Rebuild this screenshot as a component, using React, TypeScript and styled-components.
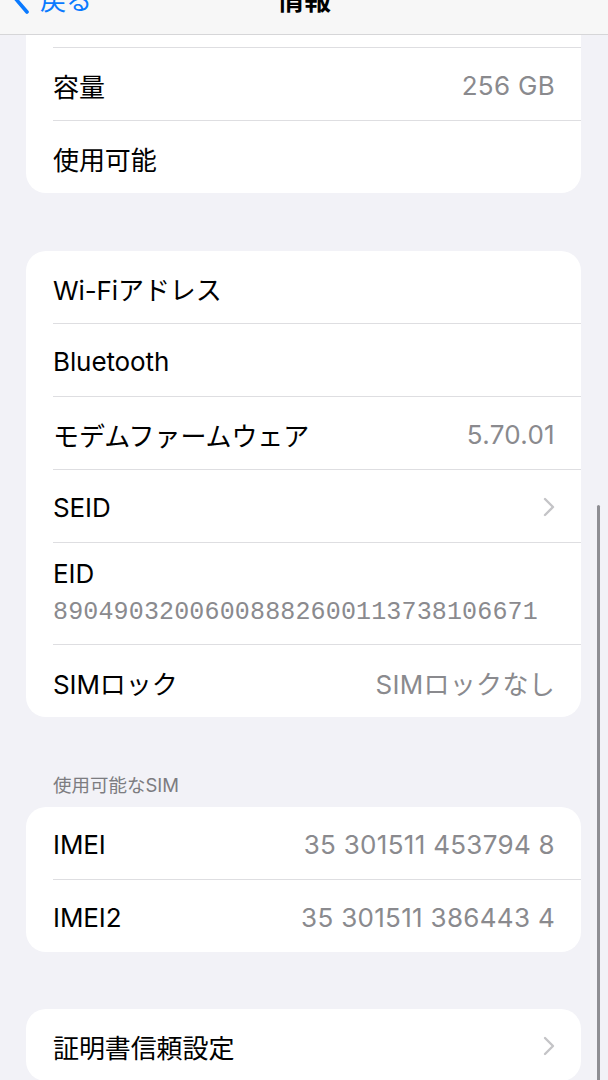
import styled, { createGlobalStyle } from "styled-components";

const GlobalStyle = createGlobalStyle`
  html, body {
    margin: 0;
    padding: 0;
    background: #f2f2f7;
  }
  body {
    font-family: "Inter", "Noto Sans CJK JP", sans-serif;
    -webkit-font-smoothing: antialiased;
  }
`;

const Page = styled.div`
  position: relative;
  width: 608px;
  height: 1080px;
  overflow: hidden;
  background: #f2f2f7;
`;

const NavBar = styled.div`
  height: 34px;
  overflow: hidden;
  background: #f7f7f7;
  border-bottom: 1px solid #d6d6d8;
`;

const NavInner = styled.div`
  position: relative;
  display: flex;
  align-items: center;
  justify-content: center;
  height: 40px;
  margin-top: -22px;
`;

const BackButton = styled.div`
  position: absolute;
  left: 12px;
  top: 0;
  bottom: 0;
  display: flex;
  align-items: center;
  gap: 10px;
  color: #0a7aff;
  font-size: 26px;
`;

const NavTitle = styled.div`
  font-size: 27px;
  font-weight: 700;
  color: #000;
`;

const Content = styled.div`
  padding: 0 27px 0 26px;
`;

const Card = styled.div<{ $cutTop?: boolean; $gap?: number }>`
  background: #fff;
  border-radius: ${({ $cutTop }) => ($cutTop ? "0 0 20px 20px" : "20px")};
  margin-top: ${({ $gap }) => $gap ?? 0}px;
  overflow: hidden;
`;

const Sliver = styled.div`
  height: 12px;
`;

const Row = styled.div<{ $first?: boolean; $tall?: boolean }>`
  display: flex;
  flex-direction: ${({ $tall }) => ($tall ? "column" : "row")};
  align-items: ${({ $tall }) => ($tall ? "flex-start" : "center")};
  justify-content: ${({ $tall }) => ($tall ? "flex-start" : "space-between")};
  min-height: ${({ $tall, $first }) => ($tall ? 102 : $first ? 72 : 73)}px;
  box-sizing: border-box;
  margin-left: 27px;
  padding-right: 26px;
  padding-top: ${({ $tall }) => ($tall ? 15 : 2)}px;
  border-top: ${({ $first }) => ($first ? "none" : "1px solid #dedee1")};
`;

const Label = styled.span`
  font-size: 26px;
  color: #000;
  letter-spacing: -0.1px;
`;

const Value = styled.span`
  font-size: 26px;
  color: #8a8a8e;
  letter-spacing: 0.3px;
`;

const MonoValue = styled.span`
  margin-top: 9px;
  font-family: "Liberation Mono", "DejaVu Sans Mono", monospace;
  font-size: 25px;
  letter-spacing: 0.15px;
  color: #8a8a8e;
`;

const SectionHeader = styled.div`
  margin: 56px 0 10px 27px;
  height: 24px;
  line-height: 24px;
  font-size: 18.5px;
  color: #7c7c80;
`;

const ScrollIndicator = styled.div`
  position: absolute;
  right: 8px;
  top: 505px;
  width: 3px;
  height: 600px;
  border-radius: 2px;
  background: #8e8e93;
`;

const Chevron = ({ color = "#c4c4c7" }: { color?: string }) => (
  <svg width="12" height="20" viewBox="0 0 12 20" fill="none">
    <path d="M2 2 L10 10 L2 18" stroke={color} strokeWidth="2.4" strokeLinecap="round" strokeLinejoin="round" />
  </svg>
);

const BackChevron = () => (
  <svg width="18" height="32" viewBox="0 0 18 32" fill="none">
    <path d="M15 2 L3 16 L15 30" stroke="#0a7aff" strokeWidth="3.6" strokeLinecap="round" strokeLinejoin="round" />
  </svg>
);

export default function App() {
  return (
    <Page>
      <GlobalStyle />
      <NavBar>
        <NavInner>
          <BackButton>
            <BackChevron />
            <span>戻る</span>
          </BackButton>
          <NavTitle>情報</NavTitle>
        </NavInner>
      </NavBar>
      <Content>
        <Card $cutTop>
          <Sliver />
          <Row>
            <Label>容量</Label>
            <Value>256 GB</Value>
          </Row>
          <Row>
            <Label>使用可能</Label>
          </Row>
        </Card>

        <Card $gap={58}>
          <Row $first>
            <Label>Wi-Fiアドレス</Label>
          </Row>
          <Row>
            <Label>Bluetooth</Label>
          </Row>
          <Row>
            <Label>モデムファームウェア</Label>
            <Value>5.70.01</Value>
          </Row>
          <Row>
            <Label>SEID</Label>
            <Chevron />
          </Row>
          <Row $tall>
            <Label>EID</Label>
            <MonoValue>89049032006008882600113738106671</MonoValue>
          </Row>
          <Row>
            <Label>SIMロック</Label>
            <Value>SIMロックなし</Value>
          </Row>
        </Card>

        <SectionHeader>使用可能なSIM</SectionHeader>
        <Card>
          <Row $first>
            <Label>IMEI</Label>
            <Value>35 301511 453794 8</Value>
          </Row>
          <Row>
            <Label>IMEI2</Label>
            <Value>35 301511 386443 4</Value>
          </Row>
        </Card>

        <Card $gap={57}>
          <Row $first>
            <Label>証明書信頼設定</Label>
            <Chevron />
          </Row>
        </Card>
      </Content>
      <ScrollIndicator />
    </Page>
  );
}
